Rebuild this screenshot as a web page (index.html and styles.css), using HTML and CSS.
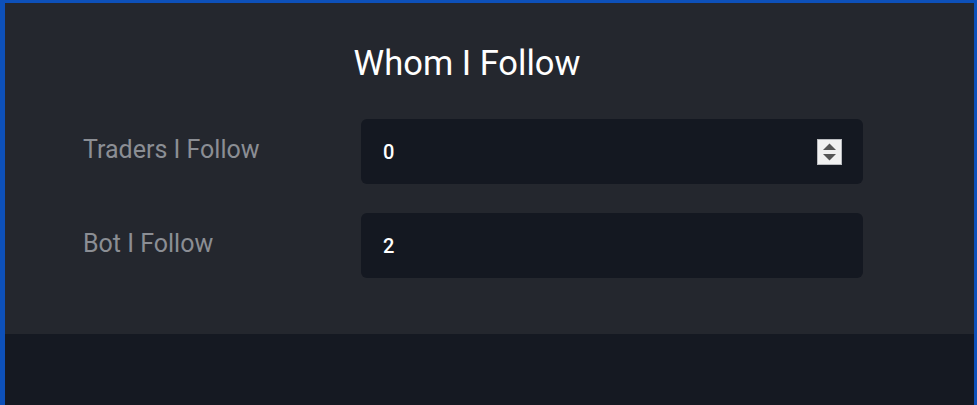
FILE: index.html
```html
<!DOCTYPE html>
<html lang="en">
  <head>
    <meta charset="UTF-8" />
    <meta name="viewport" content="width=device-width, initial-scale=1.0" />
    <title>Whom I Follow</title>
    <link rel="stylesheet" href="styles.css">
  </head>
  <body>
    <div class="frame">
      <div class="card">
        <h1>Whom I Follow</h1>

        <!-- jumlah trader -->
        <div class="row">
          <label class="label" for="traders">Traders I Follow</label>
          <div class="field">
            <input type="text" id="traders" value="0" readonly />
            <span class="spinner">
              <svg width="25" height="26" viewBox="0 0 25 26">
                <rect x="0.5" y="0.5" width="24" height="25" fill="#f1f1f1" stroke="#b9bbbf" />
                <path d="M6 11 L12.5 4.5 L19 11 Z" fill="#555" />
                <path d="M6 15 L12.5 21.5 L19 15 Z" fill="#555" />
              </svg>
            </span>
          </div>
        </div>

        <!-- jumlah bot -->
        <div class="row">
          <label class="label" for="bots">Bot I Follow</label>
          <div class="field">
            <input type="text" id="bots" value="2" readonly />
          </div>
        </div>
      </div>
      <div class="footer"></div>
    </div>
  </body>
</html>
```

FILE: styles.css
```css
* {
  margin: 0;
  padding: 0;
  box-sizing: border-box;
}

body {
  font-family: Roboto, "Liberation Sans", sans-serif;
  background-color: #151922;
  height: 100vh;
  overflow: hidden;
}

.frame {
  height: 100vh;
  border-top: 3px solid #0d50b9;
  border-left: 5px solid #0d50b9;
  border-right: 3px solid #0d50b9;
  display: flex;
  flex-direction: column;
}

.card {
  background-color: #24272e;
  height: 331px;
  padding: 41px 111px 0 78px;
}

h1 {
  color: #ffffff;
  font-size: 34.5px;
  font-weight: 400;
  line-height: 38px;
  text-align: center;
  padding-right: 12px;
  margin-bottom: 37px;
}

.row {
  display: flex;
  align-items: center;
  margin-bottom: 29px;
}

.label {
  width: 278px;
  color: #8b8e94;
  font-size: 25px;
  line-height: 28px;
  margin-bottom: 3px;
}

.field {
  flex: 1;
  height: 65px;
  background-color: #141821;
  border-radius: 6px;
  display: flex;
  align-items: center;
  padding: 0 21px 0 22px;
}

.field input {
  flex: 1;
  background: transparent;
  border: none;
  outline: none;
  color: #ffffff;
  font-family: inherit;
  font-size: 20px;
  font-weight: 500;
}

.spinner {
  display: flex;
  width: 25px;
  height: 26px;
}

.footer {
  flex: 1;
  background-color: #151922;
}
```
